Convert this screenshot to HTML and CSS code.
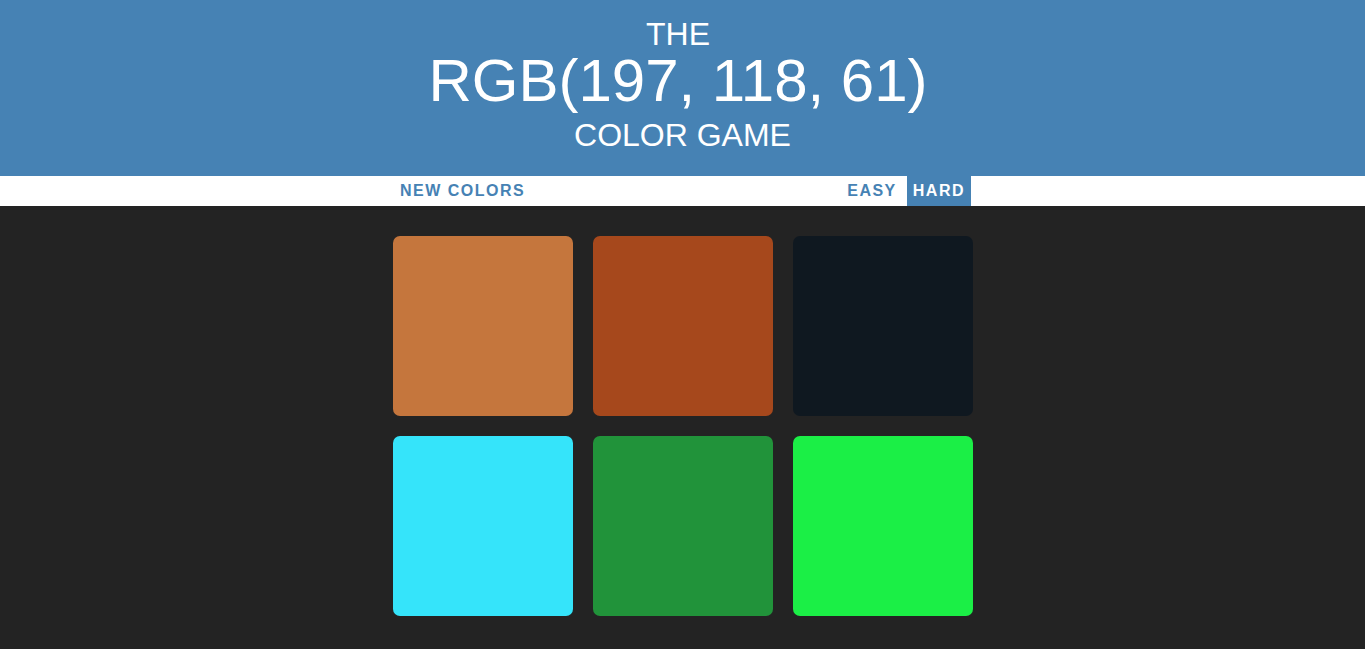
FILE: index.html
```html
<!DOCTYPE html>
<html lang="en">
<head>
<meta charset="utf-8">
<title>Color Game</title>
<link rel="stylesheet" href="styles.css">
</head>
<body>
<h1 class="title">
  <span class="title-small title-first">The</span>
  <span class="title-rgb">RGB(197, 118, 61)</span>
  <span class="title-small title-last">Color Game</span>
</h1>
<div class="stripe">
  <button class="btn btn-new">New Colors</button>
  <span class="message"></span>
  <button class="btn">Easy</button>
  <button class="btn btn-selected">Hard</button>
</div>
<div class="board">
  <div class="square sq1"></div>
  <div class="square sq2"></div>
  <div class="square sq3"></div>
  <div class="square sq4"></div>
  <div class="square sq5"></div>
  <div class="square sq6"></div>
</div>
</body>
</html>
```
FILE: styles.css
```css
html, body {
  margin: 0;
  padding: 0;
}
body {
  background: #232323;
  font-family: "Liberation Sans", Arial, sans-serif;
}
.title {
  margin: 0;
  padding: 18px 0 17px;
  background: #4682b4;
  color: #fff;
  font-weight: normal;
  text-align: center;
  text-transform: uppercase;
}
.title-small {
  display: block;
  font-size: 32px;
  line-height: 32px;
}
.title-first {
  padding-right: 9px;
}
.title-last {
  line-height: 47px;
}
.title-rgb {
  display: block;
  font-size: 60px;
  line-height: 62px;
  padding-right: 9px;
}
.stripe {
  display: flex;
  justify-content: center;
  align-items: stretch;
  height: 30px;
  background: #fff;
}
.btn {
  border: none;
  background: none;
  margin: 0;
  padding: 0 6px;
  font-family: "Liberation Sans", Arial, sans-serif;
  font-size: 16px;
  font-weight: bold;
  letter-spacing: 1.5px;
  text-transform: uppercase;
  color: #4682b4;
  height: 30px;
  line-height: 30px;
}
.btn-selected {
  background: #4682b4;
  color: #fff;
  margin-left: 4px;
}
.message {
  display: block;
  width: 310px;
}
.board {
  display: grid;
  grid-template-columns: repeat(3, 180px);
  gap: 20px;
  width: 580px;
  margin: 30px auto 0;
}
.square {
  height: 180px;
  border-radius: 7px;
}
.sq1 { background: rgb(197, 118, 61); }
.sq2 { background: #a6481c; }
.sq3 { background: #0f1820; }
.sq4 { background: #35e4fa; }
.sq5 { background: #21933a; }
.sq6 { background: #1bef46; }
```
